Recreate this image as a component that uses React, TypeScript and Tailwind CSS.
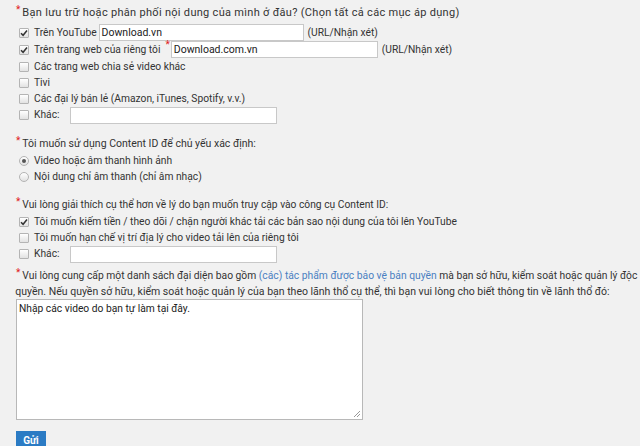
function Box({ checked }: { checked?: boolean }) {
  return (
    <span className="w-[10px] h-[10px] shrink-0 border border-[#b4b4b4] rounded-[1px] bg-gradient-to-b from-[#ffffff] to-[#e2e2e2] flex items-center justify-center">
      {checked && (
        <svg width="8" height="8" viewBox="0 0 8 8">
          <path d="M1 4.2 L3.1 6.3 L7 1.5" fill="none" stroke="#333" strokeWidth="1.5" />
        </svg>
      )}
    </span>
  );
}

function Radio({ checked }: { checked?: boolean }) {
  return (
    <span className="w-[10px] h-[10px] shrink-0 border border-[#b4b4b4] rounded-full bg-gradient-to-b from-[#ffffff] to-[#e2e2e2] flex items-center justify-center">
      {checked && <span className="w-[4px] h-[4px] rounded-full bg-[#555]" />}
    </span>
  );
}

function Field({ w, value }: { w: string; value?: string }) {
  return (
    <span className={`${w} h-[17px] bg-white border border-[#c8c8c8] px-[2px] flex items-center text-[#222] text-[10.5px]`}>
      {value}
    </span>
  );
}

function Star() {
  return <span className="text-[#e02020] mr-[2px] text-[10px] self-start leading-[10px]">*</span>;
}

export default function App() {
  return (
    <div className="w-[640px] h-[446px] overflow-hidden bg-[#f1f1f1] text-[#333] text-[10.25px] leading-[16px] font-['Roboto',sans-serif] pl-[16px] pt-[5px]">
      <div className="flex items-start">
        <Star />
        <span className="text-[11px] tracking-[0.3px] whitespace-nowrap">
          Bạn lưu trữ hoặc phân phối nội dung của mình ở đâu? (Chọn tất cả các mục áp dụng)
        </span>
      </div>
      <div className="mt-[3px] pl-[3px] flex flex-col">
        <div className="flex items-center gap-[5px] h-[17px]">
          <Box checked />
          <span>Trên YouTube</span>
          <div className="flex items-center gap-[4px] -ml-[3px]">
            <Field w="w-[205px]" value="Download.vn" />
            <span>(URL/Nhận xét)</span>
          </div>
        </div>
        <div className="flex items-center gap-[5px] h-[17px]">
          <Box checked />
          <span>Trên trang web của riêng tôi</span>
          <div className="flex items-center">
            <span className="text-[#e02020] text-[10px] self-start leading-[10px] -mt-[1px]">*</span>
            <Field w="w-[207px] ml-[1px]" value="Download.com.vn" />
            <span className="ml-[4px]">(URL/Nhận xét)</span>
          </div>
        </div>
        <div className="flex items-center gap-[5px] h-[17px]">
          <Box />
          <span>Các trang web chia sẻ video khác</span>
        </div>
        <div className="flex items-center gap-[5px] h-[15px]">
          <Box />
          <span>Tivi</span>
        </div>
        <div className="flex items-center gap-[5px] h-[17px]">
          <Box />
          <span>Các đại lý bán lẻ (Amazon, iTunes, Spotify, v.v.)</span>
        </div>
        <div className="flex items-center gap-[5px] h-[16px]">
          <Box />
          <span>Khác:</span>
          <Field w="w-[207px] ml-[5px]" />
        </div>
      </div>

      <div className="flex items-start mt-[13px]">
        <Star />
        <span className="text-[10.5px]">Tôi muốn sử dụng Content ID để chủ yếu xác định:</span>
      </div>
      <div className="mt-[1px] pl-[3px] flex flex-col">
        <div className="flex items-center gap-[5px] h-[16px]">
          <Radio checked />
          <span>Video hoặc âm thanh hình ảnh</span>
        </div>
        <div className="flex items-center gap-[5px] h-[16px]">
          <Radio />
          <span>Nội dung chỉ âm thanh (chỉ âm nhạc)</span>
        </div>
      </div>

      <div className="flex items-start mt-[12px]">
        <Star />
        <span>Vui lòng giải thích cụ thể hơn về lý do bạn muốn truy cập vào công cụ Content ID:</span>
      </div>
      <div className="mt-[1px] pl-[3px] flex flex-col">
        <div className="flex items-center gap-[5px] h-[16px]">
          <Box checked />
          <span>Tôi muốn kiếm tiền / theo dõi / chặn người khác tải các bản sao nội dung của tôi lên YouTube</span>
        </div>
        <div className="flex items-center gap-[5px] h-[16px]">
          <Box />
          <span>Tôi muốn hạn chế vị trí địa lý cho video tải lên của riêng tôi</span>
        </div>
        <div className="flex items-center gap-[5px] h-[16px]">
          <Box />
          <span>Khác:</span>
          <Field w="w-[207px] ml-[5px]" />
        </div>
      </div>

      <div className="flex items-start mt-[6px]">
        <Star />
        <p className="whitespace-nowrap text-[10.3px]">
          Vui lòng cung cấp một danh sách đại diện bao gồm{" "}
          <span className="text-[#4a7fc1]">(các) tác phẩm được bảo vệ bản quyền</span> mà bạn sở hữu, kiểm soát hoặc quản lý độc
          <br />
          <span className="-ml-[7px] text-[10.5px]">
            quyền. Nếu quyền sở hữu, kiểm soát hoặc quản lý của bạn theo lãnh thổ cụ thể, thì bạn vui lòng cho biết thông tin về lãnh thổ đó:
          </span>
        </p>
      </div>
      <div className="-mt-[1px] w-[347px] h-[121px] bg-white border border-[#b8b8b8] px-[2px] py-[1px] text-[#222] text-[10.25px] relative">
        Nhập các video do bạn tự làm tại đây.
        <svg className="absolute right-[2px] bottom-[2px]" width="7" height="7" viewBox="0 0 7 7">
          <path d="M7 1 L1 7 M7 4 L4 7" stroke="#999" strokeWidth="1" />
        </svg>
      </div>
      <button className="mt-[11px] w-[30px] h-[20px] bg-[#2b7bc4] text-white font-bold text-[10px] flex items-center justify-center">
        Gửi
      </button>
    </div>
  );
}
